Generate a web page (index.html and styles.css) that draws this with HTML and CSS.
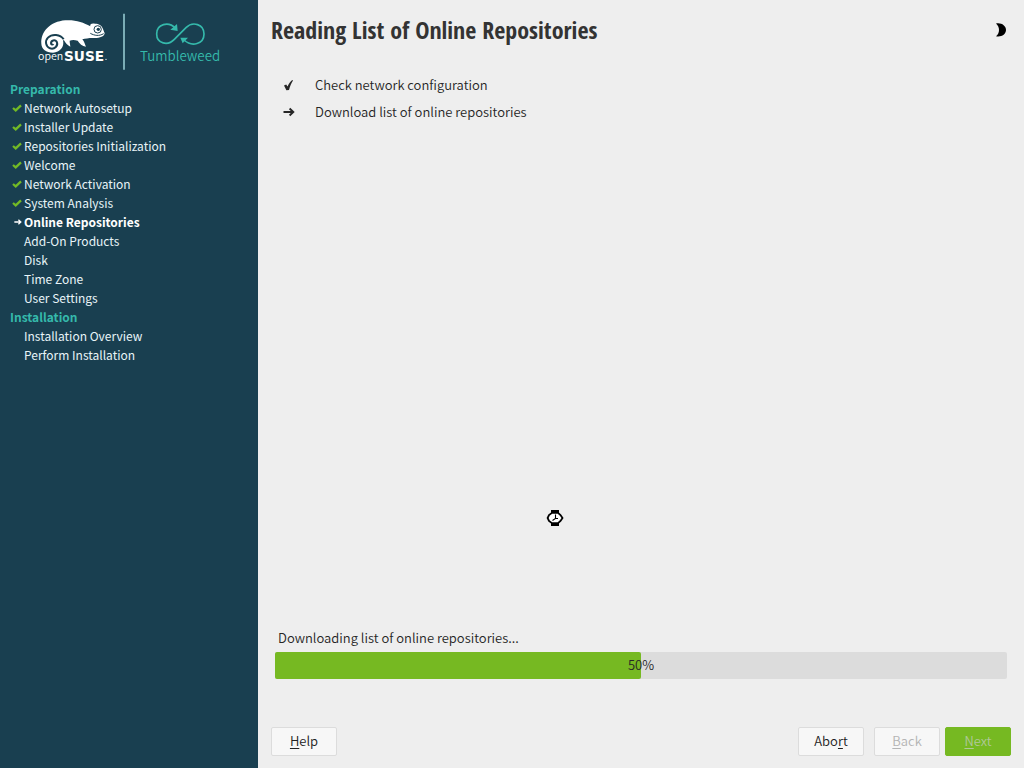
FILE: index.html
```html
<!DOCTYPE html>
<html lang="en">
<head>
<meta charset="utf-8">
<title>openSUSE Tumbleweed Installation</title>
<link rel="stylesheet" href="styles.css">
</head>
<body>
<svg class="symbols" aria-hidden="true">
  <symbol id="tick" viewBox="0 0 10 8"><path d="M1 4 L3.7 6.4 L9 1.4" fill="none" stroke="currentColor" stroke-width="2.3"/></symbol>
  <symbol id="arrow" viewBox="0 0 12 10"><path d="M0.5 5 H10 M6.6 1.5 L10.3 5 L6.6 8.5" fill="none" stroke="currentColor" stroke-width="1.9"/></symbol>
</svg>
<div class="installer">
  <aside class="sidebar">
    <svg class="logo" viewBox="0 0 600 210" role="img" aria-label="openSUSE Tumbleweed">
      <path fill="#fff" d="M34 116 C32 80 60 50 106 46 C136 44 160 52 181 64 C179 58 184 54 195 56 C206 56 216 62 218 70 L224 85 C222 96 208 100 188 99 C176 99 166 101 157 103 C163 110 165 119 168 125 C157 123 148 116 143 107 C133 104 126 104 119 107 C119 114 121 120 121 125 C111 121 106 112 102 106 L99 106 C104 126 90 142 69 143 C48 143 35 132 34 116Z"/>
      <path class="logo-gap" d="M101 103 C91 87 66 86 54 98 C44 108 47 125 60 130 C74 134 86 122 80 110 C75 103 63 106 63 115 C63 119 68 120 70 117"/>
      <circle class="logo-eye" cx="203" cy="73" r="11"/>
      <circle cx="205" cy="73" r="5" fill="#193f50"/>
      <path class="logo-mouth" d="M221 86 C207 94 194 92 181 85"/>
      <text class="logo-open" x="24" y="165">open</text>
      <text class="logo-suse" x="102" y="167">SUSE</text>
      <circle cx="228" cy="163" r="2" fill="#fff"/>
      <path class="logo-rule" d="M282 26 V194"/>
      <path class="logo-loop" d="M437 70 C415 48 380 57 380 87 C380 117 414 123 433 103 L468 68 C488 48 522 57 522 87 C522 117 486 127 462 105"/>
      <path fill="#35b9ab" d="M441 57 L443 78 L421 74Z M451 98 L474 98 L458 115Z"/>
      <text class="logo-product" x="330" y="169">Tumbleweed</text>
    </svg>
    <nav class="steps" aria-label="Installation steps">
      <h2 class="stage">Preparation</h2>
      <ol class="step-list">
        <li class="step done"><svg class="mark"><use href="#tick"/></svg>Network Autosetup</li>
        <li class="step done"><svg class="mark"><use href="#tick"/></svg>Installer Update</li>
        <li class="step done"><svg class="mark"><use href="#tick"/></svg>Repositories Initialization</li>
        <li class="step done"><svg class="mark"><use href="#tick"/></svg>Welcome</li>
        <li class="step done"><svg class="mark"><use href="#tick"/></svg>Network Activation</li>
        <li class="step done"><svg class="mark"><use href="#tick"/></svg>System Analysis</li>
        <li class="step current" aria-current="step"><svg class="mark mark-arrow"><use href="#arrow"/></svg>Online Repositories</li>
        <li class="step">Add-On Products</li>
        <li class="step">Disk</li>
        <li class="step">Time Zone</li>
        <li class="step">User Settings</li>
      </ol>
      <h2 class="stage">Installation</h2>
      <ol class="step-list">
        <li class="step">Installation Overview</li>
        <li class="step">Perform Installation</li>
      </ol>
    </nav>
  </aside>
  <main class="content">
    <header class="header">
      <h1 class="title">Reading List of Online Repositories</h1>
      <button class="theme" type="button" aria-label="Switch theme"><svg class="moon" viewBox="0 0 12 14"><path d="M1 0.6 C6 -0.6 11 2.6 11 7 C11 11.4 6 14.4 1 13.2 C5 10 5 4 1 0.6Z"/></svg></button>
    </header>
    <ul class="tasks">
      <li class="task"><svg class="task-icon" viewBox="0 0 12 12"><path d="M1 6.4 L3.2 5.6 L4.5 7.4 C5.8 4.6 7.4 2.2 9.2 0.9 L10 1.6 C8.4 4 7 7.6 6 11 L3.4 11.2Z" fill="currentColor"/></svg>Check network configuration</li>
      <li class="task"><svg class="task-icon"><use href="#arrow"/></svg>Download list of online repositories</li>
    </ul>
    <section class="download">
      <p class="download-label" id="download-label">Downloading list of online repositories...</p>
      <div class="progress" role="progressbar" aria-labelledby="download-label" aria-valuenow="50" aria-valuemin="0" aria-valuemax="100">
        <div class="progress-fill" style="width: 50%"></div>
        <span class="progress-text">50%</span>
      </div>
    </section>
    <footer class="actions">
      <button class="button help" type="button"><span><u>H</u>elp</span></button>
      <button class="button abort" type="button"><span>Abo<u>r</u>t</span></button>
      <button class="button back" type="button" disabled><span><u>B</u>ack</span></button>
      <button class="button next" type="button" disabled><span><u>N</u>ext</span></button>
    </footer>
  </main>
  <svg class="pointer" viewBox="0 0 18 16" aria-hidden="true">
    <path d="M5 0 H13 V3 H5Z M5 13 H13 V16 H5Z"/>
    <path d="M6 2.8 H12 L14.5 5 L16.5 8 L14.5 11 L12 13.2 H6 L3 11 L1.6 8 L3 5Z" fill="#fff" stroke="#000" stroke-width="1.8"/>
    <path d="M9.5 4.5 V8.5 L6.5 10.5 M9.5 8.5 H12" fill="none" stroke="#000" stroke-width="1.1"/>
  </svg>
</div>
</body>
</html>
```
FILE: styles.css
```css
* { box-sizing: border-box; }

body {
  margin: 0;
  font-family: "Noto Sans CJK SC", "Open Sans", sans-serif;
  font-size: 13px;
  font-weight: 350;
  line-height: 19px;
  color: #262626;
  background: #eee;
}

.symbols { display: none; }

.installer {
  position: relative;
  display: flex;
  min-height: 100vh;
}

.sidebar {
  flex: none;
  width: 258px;
  padding: 5px 10px;
  background: #193f50;
  color: #e8f4f8;
}

.logo {
  display: block;
  width: 200px;
  height: 70px;
  margin: 0 0 4px 20px;
}

.logo-gap { fill: none; stroke: #193f50; stroke-width: 6; }
.logo-eye { fill: none; stroke: #193f50; stroke-width: 3; }
.logo-mouth { fill: none; stroke: #193f50; stroke-width: 3; }
.logo-rule { stroke: #8fc3cb; stroke-width: 5; }
.logo-loop { fill: none; stroke: #35b9ab; stroke-width: 5; }
.logo-open { font-size: 32px; fill: #fff; }
.logo-suse { font: bold 41px "DejaVu Sans", sans-serif; fill: #fff; }
.logo-product { font-size: 40px; fill: #35b9ab; }

.steps {
  font-size: 12px;
  font-weight: 400;
}

.stage {
  margin: 0;
  font-size: 12px;
  font-weight: 700;
  color: #35b9ab;
}

.step-list, .tasks {
  margin: 0;
  padding: 0;
  list-style: none;
}

.step {
  display: flex;
  align-items: center;
  padding-left: 14px;
}

.mark {
  width: 10px;
  height: 8px;
  margin: 0 2px 0 -12px;
  color: #73ba25;
}

.mark-arrow { width: 8px; margin: 0 2px 0 -10px; color: #fff; }
.current { font-weight: 700; color: #fff; }

.content {
  flex: 1;
  display: flex;
  flex-direction: column;
  padding: 12px 13px;
}

.header {
  display: flex;
  justify-content: space-between;
  align-items: center;
  height: 36px;
}

.title {
  margin: 0;
  color: #333;
  font: bold 24px/36px "Open Sans Condensed", "Noto Sans Condensed", "Liberation Sans Narrow", "Open Sans", sans-serif;
}

.theme {
  display: flex;
  padding: 0 4px;
  border: 0;
  background: none;
}

.moon { width: 12px; height: 14px; }

.tasks {
  display: grid;
  gap: 8px;
  margin-top: 27px;
  padding-left: 12px;
}

.task {
  display: flex;
  align-items: center;
  gap: 20px;
}

.task-icon { width: 12px; height: 12px; }

.download {
  margin-top: auto;
  padding: 0 4px;
}

.download-label { margin: 0 3px 5px; }

.progress {
  display: grid;
  height: 27px;
  background: #dcdcdc;
  border-radius: 2px;
}

.progress-fill {
  grid-area: 1 / 1;
  background: #76b922;
  border-radius: 2px;
}

.progress-text {
  grid-area: 1 / 1;
  justify-self: center;
  line-height: 25px;
}

.actions {
  display: flex;
  margin-top: 48px;
}

.button {
  width: 66px;
  height: 29px;
  padding: 0 0 2px;
  border: 1px solid #dcdcdc;
  border-radius: 2px;
  background: #f7f7f7;
  color: #222;
  font: inherit;
}

.button u { text-underline-offset: 2px; }
.abort { margin-left: auto; }
.back { margin: 0 5px 0 10px; color: #b4b4b4; }
.next { border-color: #76b922; background: #76b922; color: #b0c89a; }

.pointer {
  position: absolute;
  left: 546px;
  top: 510px;
  width: 18px;
  height: 16px;
}
```
